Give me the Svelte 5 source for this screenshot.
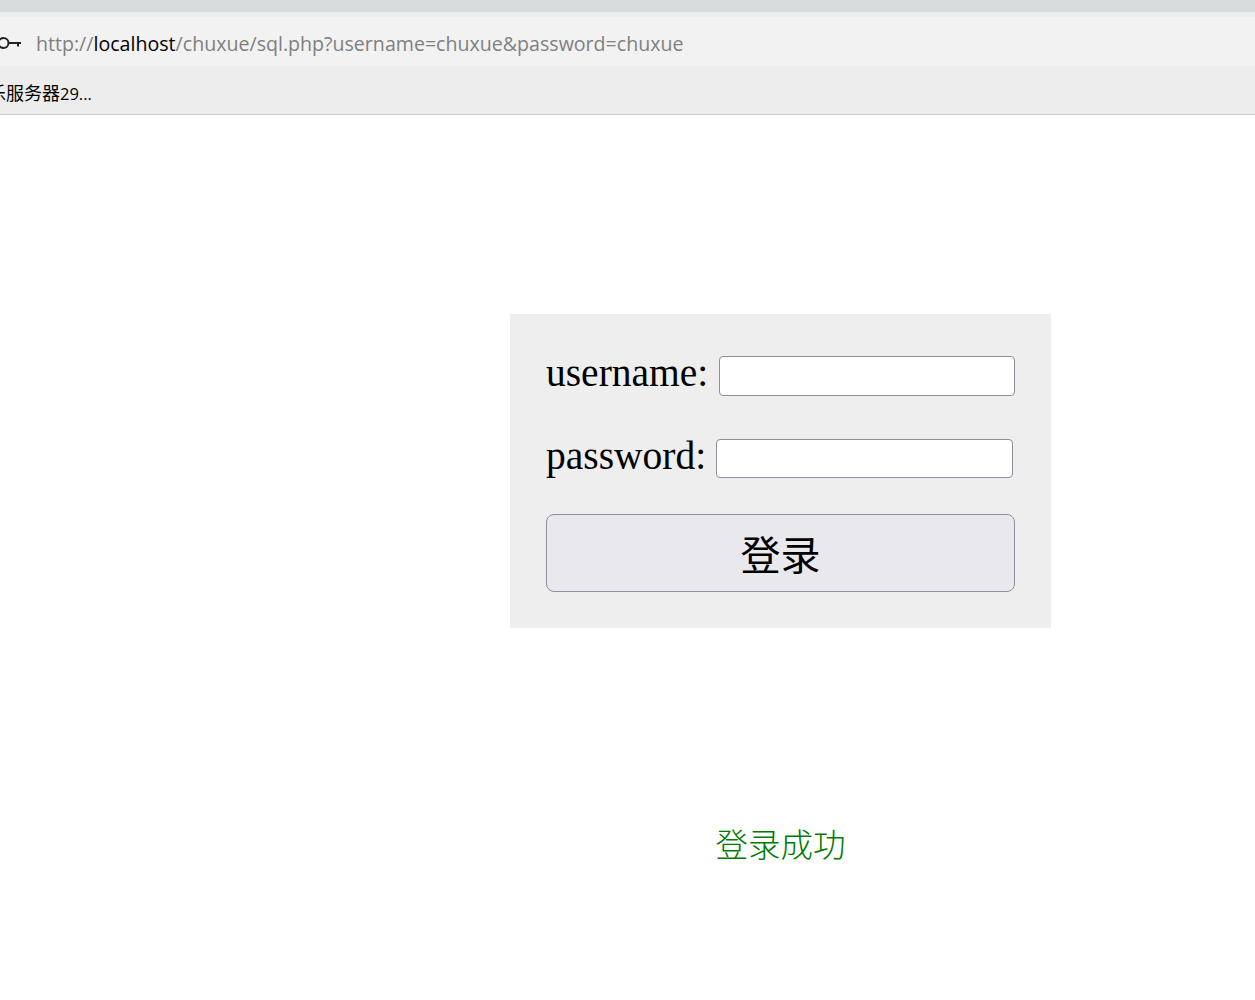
<script>
    let username = '';
    let password = '';
    const message = '登录成功';
</script>

<div class="browser">
    <div class="tabstrip"></div>
    <div class="gap"></div>
    <div class="address">
        <svg class="key" width="22" height="14" viewBox="0 0 22 14">
            <circle cx="3.5" cy="7" r="5" fill="none" stroke="#222" stroke-width="2" />
            <path d="M8.5 7H21M18 7v3.6" fill="none" stroke="#222" stroke-width="2" />
        </svg>
        <span class="url">http://<b>localhost</b>/chuxue/sql.php?username=chuxue&amp;password=chuxue</span>
    </div>
    <div class="bookmarks"><span>乐服务器<small>29...</small></span></div>
</div>

<main>
    <form class="card" on:submit|preventDefault>
        <label class="row">
            <span>username:</span>
            <input type="text" bind:value={username} />
        </label>
        <label class="row second">
            <span>password:</span>
            <input type="password" bind:value={password} />
        </label>
        <button type="submit">登录</button>
    </form>
    <p class="message">{message}</p>
</main>

<style>
    :global(body) { background: #fff; overflow: hidden; }
    .browser { font-family: "Open Sans", "Noto Sans CJK SC", sans-serif; overflow: hidden; }
    .tabstrip { height: 12px; background: #d9dcdd; }
    .gap { height: 5px; background: #ecedee; }
    .address { height: 49px; background: #f2f2f2; display: flex; align-items: center; gap: 14px; }
    .key { flex: none; margin-top: 2px; }
    .url { font-size: 19.6px; color: #808080; white-space: nowrap; margin-top: 4px; }
    .url b { font-weight: 400; color: #000; }
    .bookmarks { height: 48px; background: #ededed; border-bottom: 1px solid #ccc; display: flex; align-items: center; font-size: 18px; color: #000; }
    .bookmarks span { margin-left: -12px; margin-top: 4px; white-space: nowrap; }
    .bookmarks small { font-size: 16.5px; }
    main { padding: 199px 0 0 510px; font-family: "Liberation Serif", "Noto Sans CJK SC", serif; }
    .card { width: 541px; box-sizing: border-box; padding: 36px; background: #eee; }
    .row { display: flex; align-items: center; gap: 10.4px; font-size: 39.5px; height: 52px; }
    .row span { margin-bottom: 6px; }
    .row.second { margin-top: 30px; height: 53px; }
    .row input { width: 296px; height: 40px; box-sizing: border-box; background: #fff; border: 1px solid #8f8f9d; border-radius: 4px; padding: 0 4px; }
    .row.second input { width: 297px; height: 39px; margin-left: -0.6px; }
    button { display: block; width: 469px; height: 78px; margin-top: 29px; box-sizing: border-box; background: #e9e9ed; border: 1px solid #8f8f9d; border-radius: 8px; font: 40px "Liberation Serif", "Noto Sans CJK SC", serif; color: #000; padding: 0; }
    .message { width: 541px; margin: 191px 0 0; text-align: center; font-size: 32.5px; font-weight: 300; color: #007a00; }
</style>
